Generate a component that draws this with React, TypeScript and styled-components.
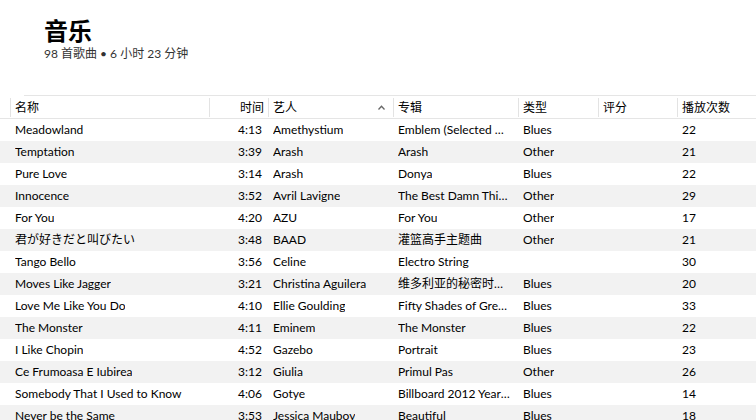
import styled, { createGlobalStyle } from 'styled-components';

const GlobalStyle = createGlobalStyle`
	html, body {
		margin: 0;
		padding: 0;
		background: #ffffff;
	}
	body {
		font-family: Lato, "Noto Sans CJK SC", sans-serif;
		color: #000;
		overflow: hidden;
	}
`;

type Track = {
	name: string;
	time: string;
	artist: string;
	album: string;
	genre: string;
	plays: number;
};

const tracks: Track[] = [
	{ name: 'Meadowland', time: '4:13', artist: 'Amethystium', album: 'Emblem (Selected Works 1999-2004)', genre: 'Blues', plays: 22 },
	{ name: 'Temptation', time: '3:39', artist: 'Arash', album: 'Arash', genre: 'Other', plays: 21 },
	{ name: 'Pure Love', time: '3:14', artist: 'Arash', album: 'Donya', genre: 'Blues', plays: 22 },
	{ name: 'Innocence', time: '3:52', artist: 'Avril Lavigne', album: 'The Best Damn Thing (Deluxe Edition)', genre: 'Other', plays: 29 },
	{ name: 'For You', time: '4:20', artist: 'AZU', album: 'For You', genre: 'Other', plays: 17 },
	{ name: '君が好きだと叫びたい', time: '3:48', artist: 'BAAD', album: '灌篮高手主题曲', genre: 'Other', plays: 21 },
	{ name: 'Tango Bello', time: '3:56', artist: 'Celine', album: 'Electro String', genre: '', plays: 30 },
	{ name: 'Moves Like Jagger', time: '3:21', artist: 'Christina Aguilera', album: '维多利亚的秘密时装秀', genre: 'Blues', plays: 20 },
	{ name: 'Love Me Like You Do', time: '4:10', artist: 'Ellie Goulding', album: 'Fifty Shades of Grey (Original Soundtrack)', genre: 'Blues', plays: 33 },
	{ name: 'The Monster', time: '4:11', artist: 'Eminem', album: 'The Monster', genre: 'Blues', plays: 22 },
	{ name: 'I Like Chopin', time: '4:52', artist: 'Gazebo', album: 'Portrait', genre: 'Blues', plays: 23 },
	{ name: 'Ce Frumoasa E Iubirea', time: '3:12', artist: 'Giulia', album: 'Primul Pas', genre: 'Other', plays: 26 },
	{ name: 'Somebody That I Used to Know', time: '4:06', artist: 'Gotye', album: 'Billboard 2012 Year-End Hot 100', genre: 'Blues', plays: 14 },
	{ name: 'Never be the Same', time: '3:53', artist: 'Jessica Mauboy', album: 'Beautiful', genre: 'Blues', plays: 18 }
];

const columns = '199px 59px 125px 125px 80px 79px 1fr';

const Page = styled.div`
	width: 756px;
	height: 420px;
	overflow: hidden;
`;

const Heading = styled.header`
	padding: 15px 0 0 44px;
	height: 95px;
	box-sizing: border-box;
`;

const Title = styled.h1`
	margin: 0;
	font-family: "Noto Sans CJK SC", sans-serif;
	font-size: 24px;
	font-weight: 700;
	line-height: 30px;
	color: #000;
`;

const Summary = styled.div`
	font-size: 12px;
	line-height: 16px;
	color: #333;
	margin-top: 1px;
`;

const Table = styled.div`
	border-top: 1px solid #e5e5e5;
	margin-left: 24px;
`;

const HeaderRow = styled.div`
	display: grid;
	grid-template-columns: ${columns};
	height: 22px;
	margin-left: -24px;
	padding-left: 10px;
	border-bottom: 1px solid #e5e5e5;
	font-size: 12px;
	line-height: 14px;
	color: #000;
`;

const HeaderCell = styled.div<{ $right?: boolean }>`
	display: flex;
	align-items: center;
	justify-content: ${(p) => (p.$right ? 'flex-end' : 'space-between')};
	padding: 0 4px 0;
	margin: 2px 0 1px;
	border-left: 1px solid #e3e3e3;
	overflow: hidden;
	white-space: nowrap;
`;

const SortIcon = styled.svg`
	width: 7px;
	height: 5px;
	margin-right: 4px;
`;

const Body = styled.div`
	margin-left: -24px;
`;

const Row = styled.div<{ $alt: boolean }>`
	display: grid;
	grid-template-columns: ${columns};
	height: 22px;
	padding-left: 10px;
	background: ${(p) => (p.$alt ? '#f2f2f2' : '#ffffff')};
	font-size: 12px;
	line-height: 14px;
	color: #000;
`;

const Cell = styled.div<{ $right?: boolean }>`
	display: flex;
	align-items: center;
	justify-content: ${(p) => (p.$right ? 'flex-end' : 'flex-start')};
	padding: 0 6px 0 ${(p) => (p.$right ? '4px' : '5px')};
	min-width: 0;
	overflow: hidden;
`;

const Clip = styled.span`
	overflow: hidden;
	text-overflow: ellipsis;
	white-space: nowrap;
`;

export default function App() {
	return (
		<Page>
			<GlobalStyle />
			<Heading>
				<Title>音乐</Title>
				<Summary>98 首歌曲 • 6 小时 23 分钟</Summary>
			</Heading>
			<Table>
				<HeaderRow>
					<HeaderCell>名称</HeaderCell>
					<HeaderCell $right>时间</HeaderCell>
					<HeaderCell>
						<span>艺人</span>
						<SortIcon viewBox="0 0 7 5">
							<path d="M0.5 4.5 L3.5 1.2 L6.5 4.5" fill="none" stroke="#666" strokeWidth="1.3" />
						</SortIcon>
					</HeaderCell>
					<HeaderCell>专辑</HeaderCell>
					<HeaderCell>类型</HeaderCell>
					<HeaderCell>评分</HeaderCell>
					<HeaderCell>播放次数</HeaderCell>
				</HeaderRow>
				<Body>
					{tracks.map((t, i) => (
						<Row key={t.name} $alt={i % 2 === 1}>
							<Cell><Clip>{t.name}</Clip></Cell>
							<Cell $right>{t.time}</Cell>
							<Cell><Clip>{t.artist}</Clip></Cell>
							<Cell><Clip>{t.album}</Clip></Cell>
							<Cell><Clip>{t.genre}</Clip></Cell>
							<Cell />
							<Cell>{t.plays}</Cell>
						</Row>
					))}
				</Body>
			</Table>
		</Page>
	);
}
